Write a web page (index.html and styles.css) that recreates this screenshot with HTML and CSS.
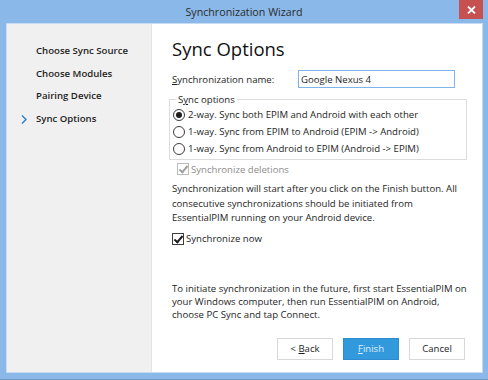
FILE: index.html
```html
<!DOCTYPE html>
<html lang="en">
<head>
  <meta charset="UTF-8">
  <title>Synchronization Wizard</title>
  <link rel="stylesheet" href="styles.css">
</head>
<body>

<div class="window">
  <div class="titlebar">
    <span class="title">Synchronization Wizard</span>
    <button class="close-btn" aria-label="Close">
      <svg width="9" height="8" viewBox="0 0 9 8"><path d="M1 0.5 L8 7.5 M8 0.5 L1 7.5" stroke="#fff" stroke-width="1.8"/></svg>
    </button>
  </div>

  <div class="client">
    <ul class="steps">
      <li>Choose Sync Source</li>
      <li>Choose Modules</li>
      <li>Pairing Device</li>
      <li class="current">
        <svg class="chevron" width="6" height="9" viewBox="0 0 6 9"><path d="M1 0.5 L5 4.5 L1 8.5" fill="none" stroke="#2a7fd0" stroke-width="1.4"/></svg>
        Sync Options
      </li>
    </ul>

    <div class="page">
      <h1>Sync Options</h1>

      <div class="name-row">
        <label for="syncName"><u>S</u>ynchronization name:</label>
        <input type="text" id="syncName" value="Google Nexus 4">
      </div>

      <fieldset class="group">
        <legend>S<u>y</u>nc options</legend>
        <label class="opt"><input type="radio" name="dir" checked>2-way. Sync both EPIM and Android with each other</label>
        <label class="opt"><input type="radio" name="dir">1-way. Sync from EPIM to Android (EPIM -&gt; Android)</label>
        <label class="opt"><input type="radio" name="dir">1-way. Sync from Android to EPIM (Android -&gt; EPIM)</label>
      </fieldset>

      <label class="check disabled"><input type="checkbox" checked disabled>Synchronize deletions</label>

      <p class="note">Synchronization will start after you click on the Finish button. All<br>consecutive synchronizations should be initiated from<br>EssentialPIM running on your Android device.</p>

      <label class="check now"><input type="checkbox" checked>Synchronize now</label>

      <p class="note future">To initiate synchronization in the future, first start EssentialPIM on<br>your Windows computer, then run EssentialPIM on Android,<br>choose PC Sync and tap Connect.</p>

      <div class="buttons">
        <button class="btn">&lt; <u>B</u>ack</button>
        <button class="btn primary"><u>F</u>inish</button>
        <button class="btn">Cancel</button>
      </div>
    </div>
  </div>
</div>

</body>
</html>
```

FILE: styles.css
```css
* {
  box-sizing: border-box;
  margin: 0;
  padding: 0;
}

body {
  font-family: "Segoe UI", "Open Sans", sans-serif;
  font-size: 9.6px;
  color: #1e1e1e;
  width: 488px;
  height: 380px;
  overflow: hidden;
  white-space: nowrap;
}

.window {
  width: 488px;
  height: 380px;
  background: #8ab8e8;
  display: flex;
  flex-direction: column;
  border-bottom: 1px solid #6e98c4;
}

.titlebar {
  height: 23px;
  flex-shrink: 0;
  display: flex;
  justify-content: center;
  align-items: center;
  position: relative;
}

.title {
  font-size: 10.7px;
  color: #2b2b2b;
}

.close-btn {
  position: absolute;
  top: 0;
  right: 5px;
  width: 24px;
  height: 19px;
  background: #c75050;
  border: none;
  display: flex;
  align-items: center;
  justify-content: center;
}

.client {
  flex: 1;
  min-height: 0;
  margin: 0 5px 6px 6px;
  border: 1px solid #c7dcf2;
  background: #fff;
  display: flex;
}

/* left side: step list */
.steps {
  list-style: none;
  width: 145px;
  flex-shrink: 0;
  background: #f0f0f0;
  border-right: 1px solid #e4e4e4;
  padding-top: 16px;
}

.steps li {
  height: 22.5px;
  line-height: 22px;
  padding-left: 29px;
  font-weight: 600;
  position: relative;
}

.chevron {
  position: absolute;
  left: 14px;
  top: 7px;
}

/* right side */
.page {
  flex: 1;
  min-width: 0;
  padding: 11px 17px 0 20px;
  display: flex;
  flex-direction: column;
}

h1 {
  font-size: 18.5px;
  font-weight: 400;
  color: #111;
  line-height: 28px;
  margin-bottom: 7px;
}

.name-row {
  display: flex;
  align-items: center;
  height: 18px;
}

.name-row label {
  width: 126px;
}

.name-row input {
  width: 157px;
  height: 18px;
  border: 1px solid #7eb4ea;
  font: inherit;
  padding: 0 2px;
  color: #1e1e1e;
  outline: none;
}

.group {
  border: 1px solid #dcdcdc;
  margin: 5px 0 0 -3px;
  width: 298px;
  padding: 0 0 2px 3px;
}

.group legend {
  padding: 0 2px;
  margin-left: 3px;
  line-height: 13px;
}

.opt {
  display: flex;
  align-items: center;
  height: 17px;
}

input[type="radio"] {
  appearance: none;
  width: 12px;
  height: 12px;
  border: 1px solid #3c3c3c;
  border-radius: 50%;
  background: #fff;
  margin-right: 3px;
  display: grid;
  place-content: center;
}

input[type="radio"]:checked::before {
  content: "";
  width: 6px;
  height: 6px;
  border-radius: 50%;
  background: #1e1e1e;
}

.check {
  display: flex;
  align-items: center;
  height: 16px;
}

input[type="checkbox"] {
  appearance: none;
  width: 12px;
  height: 12px;
  border: 1px solid #3c3c3c;
  background: #fff;
  margin-right: 2px;
  position: relative;
}

input[type="checkbox"]:checked::after {
  content: "";
  position: absolute;
  left: 3px;
  top: 0;
  width: 3px;
  height: 7px;
  border: solid #1e1e1e;
  border-width: 0 2px 2px 0;
  transform: rotate(40deg);
}

.check.disabled {
  color: #8d8d8d;
  margin: 1px 0 0 5px;
}

.check.disabled input {
  border-color: #bcbcbc;
}

.check.disabled input::after {
  border-color: #a0a0a0;
}

.note {
  line-height: 14.5px;
  margin-top: 5px;
}

.check.now {
  margin-top: 5px;
}

.note.future {
  line-height: 13px;
  margin-top: 35.5px;
}

.buttons {
  display: flex;
  justify-content: flex-end;
  gap: 10px;
  margin-top: 16.5px;
}

.btn {
  width: 56px;
  height: 22px;
  border: 1px solid #d8d8d8;
  background: #fff;
  font: inherit;
  color: #1e1e1e;
}

.btn.primary {
  background: #3399dd;
  border-color: #2d8cd0;
  color: #dff0ff;
}
```
